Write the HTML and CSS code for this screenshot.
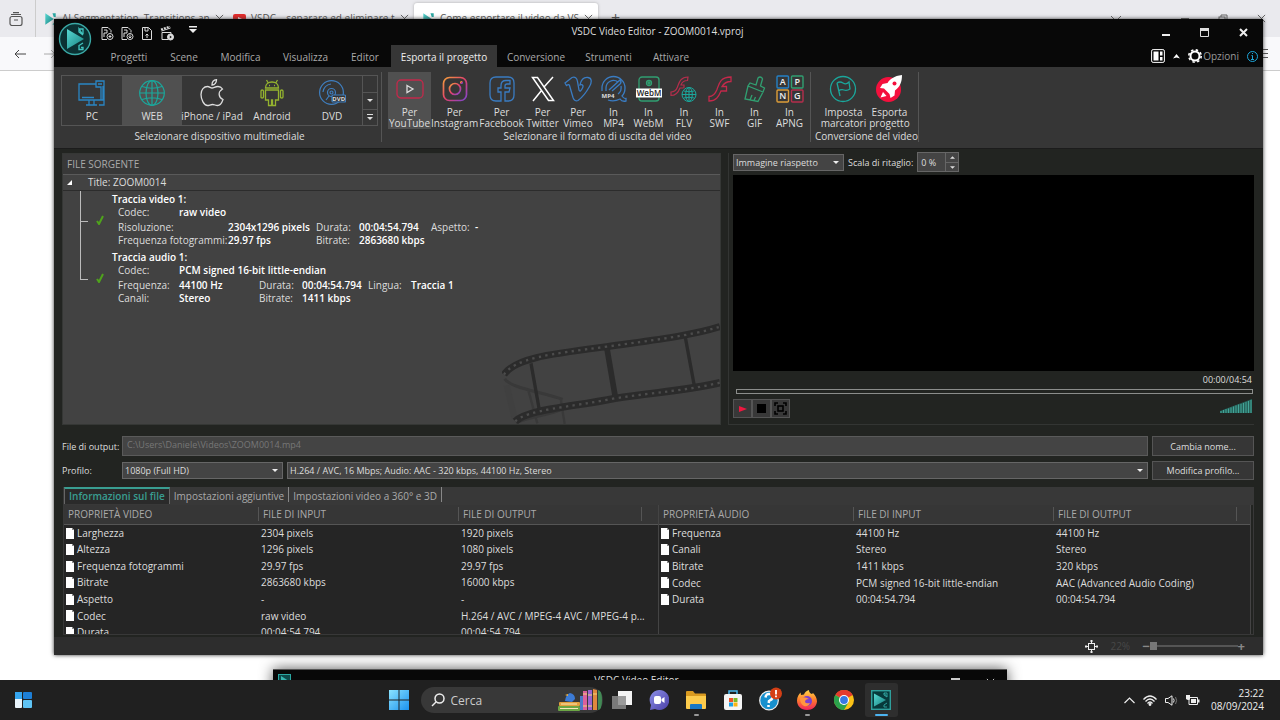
FILE: index.html
```html
<!DOCTYPE html>
<html lang="it">
<head>
    <meta charset="UTF-8">
    <meta name="viewport" content="width=device-width, initial-scale=1.0">
    <title>VSDC Video Editor - ZOOM0014.vproj</title>

    <link rel="stylesheet" href="styles.css">
</head>
<body>
    <!-- Shared icons -->
    <svg class="defs" width="0" height="0" aria-hidden="true">
        <linearGradient id="teal" x1="0" y1="0" x2="1" y2="1"><stop offset="0" stop-color="#58d8d2"/><stop offset="1" stop-color="#16807f"/></linearGradient>
        <linearGradient id="insta" x1="0" y1="0" x2="1" y2="1"><stop offset="0" stop-color="#f6a13b"/><stop offset=".5" stop-color="#e0406c"/><stop offset="1" stop-color="#7c46d0"/></linearGradient>
        <linearGradient id="win" x1="0" y1="0" x2="1" y2="1"><stop offset="0" stop-color="#8be3ff"/><stop offset="1" stop-color="#1a91ee"/></linearGradient>
        <linearGradient id="fire" x1="0" y1="0" x2="0" y2="1"><stop offset="0" stop-color="#ffd84a"/><stop offset=".5" stop-color="#ff7b2c"/><stop offset="1" stop-color="#f0245e"/></linearGradient>
        <linearGradient id="chat" x1="0" y1="0" x2="1" y2="1"><stop offset="0" stop-color="#8c8fe8"/><stop offset="1" stop-color="#4a3fa6"/></linearGradient>
        <symbol id="i-globe" viewBox="0 0 26 26"><g fill="none" stroke="currentColor" stroke-width="1.200"><circle cx="13" cy="13" r="12.3"/><ellipse cx="13" cy="13" rx="6" ry="12.3"/><path d="M13 .6v24.800M.6 13h24.800M3 6.500q10 3.500 20 0M3 19.500q10-3.500 20 0"/></g></symbol>
        <symbol id="i-vsdc" viewBox="0 0 20 20"><path d="M2 1l13 9-13 9z" fill="url(#teal)"/><path d="M13 1h5v6h-3zM18 12v7h-5z" fill="#2ba7a2"/></symbol>
        <symbol id="i-x" viewBox="0 0 10 10"><path d="M1 1l8 8M9 1L1 9" fill="none" stroke="currentColor"/></symbol>
        <symbol id="i-down" viewBox="0 0 8 4"><path d="M0 0h8L4 4z" fill="currentColor"/></symbol>
        <symbol id="i-file" viewBox="0 0 8 11"><path d="M0 0h6l2 2v9H0z" fill="#fff"/><path d="M6 0v2h2z" fill="#888"/></symbol>
        <symbol id="i-check" viewBox="0 0 8 10"><path d="M1 6l2 3L7 1" fill="none" stroke="#4fa31c" stroke-width="2"/></symbol>
    </svg>

    <div class="desktop">
        <!-- Browser behind the editor -->
        <div class="browser">
            <div class="browser-tabs">
                <span class="browser-lib"><svg width="14" height="14" viewBox="0 0 14 14" fill="none" stroke="#555" stroke-width="1.200"><rect x="1" y="4.500" width="12" height="9" rx="2"/><path d="M2 2.500h10M4 .6h6M5 8h4"/></svg></span>
                <div class="browser-tab"><svg width="13" height="14"><use href="#i-vsdc"/></svg><span>AI Segmentation, Transitions an</span><svg width="9" height="9"><use href="#i-x"/></svg></div>
                <div class="browser-tab"><svg width="13" height="10" viewBox="0 0 13 10"><rect width="13" height="10" rx="2" fill="#e22c2c"/><path d="M5 3l4 2-4 2z" fill="#fff"/></svg><span>VSDC – separare ed eliminare t</span><svg width="9" height="9"><use href="#i-x"/></svg></div>
                <div class="browser-tab current"><svg width="13" height="14"><use href="#i-vsdc"/></svg><span>Come esportare il video da VS</span><svg width="9" height="9"><use href="#i-x"/></svg></div>
                <span class="browser-plus">+</span>
                <div class="browser-window">
                    <svg width="12" height="8" viewBox="0 0 12 8" fill="none" stroke="#666"><path d="M1 1l5 5 5-5"/></svg>
                    <svg width="8" height="8" viewBox="0 0 8 8" stroke="#666"><path d="M0 3.500h8"/></svg>
                    <svg width="10" height="10" viewBox="0 0 10 10" fill="none" stroke="#666"><rect x="1" y="3" width="6" height="6"/><path d="M3 3V1h6v6H7"/></svg>
                    <svg width="9" height="9"><use href="#i-x"/></svg>
                </div>
            </div>
            <div class="browser-bar">
                <svg width="12" height="10" viewBox="0 0 12 10" fill="none" stroke="#444"><path d="M12 5H1M5 1L1 5l4 4"/></svg>
                <svg width="12" height="10" viewBox="0 0 12 10" fill="none" stroke="#aaa"><path d="M0 5h11M7 1l4 4-4 4"/></svg>
                <svg class="browser-menu" width="10" height="9" viewBox="0 0 10 9" stroke="#555"><path d="M0 .5h10M0 4.500h10M0 8.500h10"/></svg>
            </div>
        </div>

        <!-- Second editor window, mostly below the taskbar -->
        <div class="back-window">
            <svg width="13" height="13" viewBox="0 0 13 13"><rect x=".5" y=".5" width="12" height="12" fill="#0d4a4b" stroke="#2ba7a2"/><path d="M3 2l7 4.500L3 11z" fill="#38b6b0"/></svg>
            <span>VSDC Video Editor</span>
            <div><svg width="9" height="9" viewBox="0 0 9 9"><path d="M0 1h9" stroke="#ccc" stroke-width="2"/></svg><svg width="9" height="9"><use href="#i-x"/></svg></div>
        </div>

        <main class="editor">
            <header class="header">
                <svg class="logo" width="34" height="34" viewBox="0 0 34 34"><circle cx="17" cy="17" r="15.500" fill="#0b3133" stroke="#3aa9a6" stroke-width="1.400"/><path d="M9 7l17 10L9 27z" fill="url(#teal)"/><path d="M21 7h4v5M21 7v3l4 3zM25 21l-4 2.500v4h4v-2h-2" fill="none" stroke="#42c4bf" stroke-width="1.300"/></svg>
                <div class="header-rows">
                    <div class="titlebar">
                        <div class="quick">
                            <button type="button" aria-label="Nuovo progetto"><svg width="13" height="15" viewBox="0 0 13 15" fill="none" stroke="#ddd"><path d="M6 13.500H1v-12h6l3 3v2M3 4h3v3H3v4"/><circle cx="9" cy="10.500" r="3"/><path d="M9 9v3M7.500 10.500h3"/></svg></button>
                            <button type="button" aria-label="Apri progetto"><svg width="13" height="15" viewBox="0 0 13 15" fill="none" stroke="#ddd"><path d="M6 13.500H1v-12h6l3 3v2M3 4h3v3H3v4"/><circle cx="9" cy="10.500" r="3"/><path d="M9 8.500v3M7.500 10.500L9 12l1.500-1.500"/></svg></button>
                            <button type="button" aria-label="Salva progetto"><svg width="12" height="15" viewBox="0 0 12 15" fill="none" stroke="#ddd"><path d="M1.500 1.500h6l3 3v9h-9zM4 2v3h3V2"/><path d="M6 8v4M4.500 9.500L6 8l1.500 1.500"/></svg></button>
                            <button type="button" aria-label="Esporta video"><svg width="14" height="15" viewBox="0 0 14 15" fill="none" stroke="#ddd"><path d="M2 6.500h9v3M2 6.500v7h6M1.500 5l9-3"/><path d="M1 3.500l9-3" stroke-width="2" stroke-dasharray="2 1"/><circle cx="10.500" cy="11" r="3" fill="#ddd"/><path d="M9.800 9.500l2 1.500-2 1.500z" fill="#111" stroke="none"/></svg></button>
                            <button type="button" aria-label="Personalizza"><svg width="8" height="7" viewBox="0 0 8 7" fill="#eee"><path d="M0 0h8v1.500H0zM0 3h8L4 7z"/></svg></button>
                        </div>
                        <h1>VSDC Video Editor - ZOOM0014.vproj</h1>
                        <div class="window-buttons">
                            <button type="button" aria-label="Riduci"><svg width="8" height="10" viewBox="0 0 8 10"><path d="M0 8h8" stroke="#eee" stroke-width="2"/></svg></button>
                            <button type="button" aria-label="Ingrandisci"><svg width="9" height="9" viewBox="0 0 9 9"><path d="M.5.5h8v8h-8z" fill="none" stroke="#ddd"/><path d="M0 1.500h9" stroke="#ddd" stroke-width="3"/></svg></button>
                            <button type="button" aria-label="Chiudi"><svg width="9" height="9" viewBox="0 0 9 9"><path d="M1 1l7 7M8 1L1 8" stroke="#eee" stroke-width="2"/></svg></button>
                        </div>
                    </div>
                    <div class="menubar">
                        <nav class="menu">
                            <a href="#">Progetti</a>
                            <a href="#">Scene</a>
                            <a href="#">Modifica</a>
                            <a href="#">Visualizza</a>
                            <a href="#">Editor</a>
                            <a href="#" class="active">Esporta il progetto</a>
                            <a href="#">Conversione</a>
                            <a href="#">Strumenti</a>
                            <a href="#">Attivare</a>
                        </nav>
                        <div class="options">
                            <button type="button" aria-label="Disposizione"><svg width="14" height="14" viewBox="0 0 14 14"><rect x=".6" y=".6" width="12.800" height="12.800" rx="1.500" fill="none" stroke="#fff"/><path d="M2.500 2.500h5v9h-5zM9 2.500h2.500v4H9zM9 8h2.500v3.500H9z" fill="#fff"/></svg></button>
                            <button type="button" aria-label="Comprimi"><svg width="7" height="5" viewBox="0 0 7 5"><path d="M0 4.500L3.500 0 7 4.500l-3.500-1z" fill="#fff"/></svg></button>
                            <button type="button" class="opzioni"><svg width="14" height="14" viewBox="0 0 14 14" fill="none" stroke="#fff"><circle cx="7" cy="7" r="4.500" stroke-width="2"/><circle cx="7" cy="7" r="6.200" stroke-width="1.600" stroke-dasharray="2.440 2.430"/></svg>Opzioni</button>
                            <button type="button" aria-label="Informazioni"><svg width="11" height="11" viewBox="0 0 11 11" fill="none" stroke="#1ea5d8"><circle cx="5.500" cy="5.500" r="5"/><path d="M4.500 4.500h1v4M4 8.500h3M5 2.500h1"/></svg></button>
                        </div>
                    </div>
                </div>
            </header>

            <section class="ribbon">
                <div class="group">
                    <div class="gallery">
                        <button type="button" class="device"><svg width="28" height="26" viewBox="0 0 28 26" fill="none" stroke="#2a86c4" stroke-width="1.300"><path d="M18 4H1v16h24V6M18 6V1h8v24h-5M18 4v3h5v13M8 25h11M11 20v5M16 20v5M4 17.500h12M20 4h4"/></svg>PC</button>
                        <button type="button" class="device selected"><svg class="cyan" width="26" height="26"><use href="#i-globe"/></svg>WEB</button>
                        <button type="button" class="device"><svg width="24" height="28" viewBox="0 0 24 28" fill="none" stroke="#ddd" stroke-width="1.300"><path d="M12 9c2 0 3-1.500 6-1.500 2 0 3.500 1 4.500 2.500-5 3-4 8.500.5 10.500-1 3-3 6-5.500 6-2 0-3-1-5-1s-3.200 1-5 1C4 26.500 1 20.500 1 15.500s3-8 6.500-8c2 0 3 1.500 4.500 1.500zM12 6c0-3 2-5 4.500-5.300C16.500 3.500 15 6 12 6z"/></svg>iPhone / iPad</button>
                        <button type="button" class="device"><svg width="24" height="28" viewBox="0 0 24 28" fill="none" stroke="#94b32f" stroke-width="1.300"><path d="M5.500 9c0-4 3-6 6.500-6s6.500 2 6.500 6zM8 3.500L6.500 1M16 3.500L17.500 1M5.500 11h13v10h-3v5.500h-3V21h-1v5.500h-3V21h-3zM1 12q0-1 1.200-1T3.500 12v6q0 1-1.300 1T1 18zM20.500 12q0-1 1.200-1T23 12v6q0 1-1.300 1t-1.200-1z"/><path d="M9 6.500h1M14 6.500h1"/></svg>Android</button>
                        <button type="button" class="device"><svg width="27" height="26" viewBox="0 0 27 26" fill="none" stroke="#3f7fc0" stroke-width="1.200"><circle cx="12.500" cy="12.500" r="11.900"/><circle cx="12.500" cy="12.500" r="4"/><circle cx="12.500" cy="12.500" r="1.500"/><path d="M4 12q1-7 8-8M7 20l3-4"/><rect x="13" y="15" width="13.500" height="7" rx="1" fill="#333"/><text x="19.700" y="21" font-size="6" font-weight="700" text-anchor="middle" fill="#ddd" stroke="none">DVD</text></svg>DVD</button>
                        <div class="scroller">
                            <button type="button" aria-label="Su" disabled></button>
                            <button type="button" aria-label="Giù"><svg width="6" height="3"><use href="#i-down"/></svg></button>
                            <button type="button" aria-label="Altro"><svg width="6" height="7" viewBox="0 0 6 7" fill="#ddd"><path d="M0 0h6v1H0zM0 3h6L3 6z"/></svg></button>
                        </div>
                    </div>
                    <h2>Selezionare dispositivo multimediale</h2>
                </div>

                <div class="group">
                    <div class="formats">
                        <button type="button" class="tool selected"><svg width="28" height="26" viewBox="0 0 28 26" fill="none" stroke-width="1.300"><rect x="1" y="4" width="26" height="18" rx="4" stroke="#c4294b"/><path d="M11 9.500l6 3.500-6 3.500z" stroke="#ddd"/></svg>Per<br>YouTube</button>
                        <button type="button" class="tool"><svg width="26" height="26" viewBox="0 0 26 26" fill="none" stroke="url(#insta)" stroke-width="1.700"><rect x="1.500" y="1.500" width="23" height="23" rx="6"/><circle cx="13" cy="13" r="5.500"/><circle cx="19.500" cy="6.500" r=".7"/></svg>Per<br>Instagram</button>
                        <button type="button" class="tool"><svg width="26" height="26" viewBox="0 0 26 26" fill="none" stroke="#3a7cc2" stroke-width="1.300"><path d="M12 25H7q-6 0-6-6V7q0-6 6-6h12q6 0 6 6v12q0 6-6 6h-3V16h4l1-4h-5v-2q0-2 2-2h3V4.500h-4q-5 0-5 5V12H9v4h3z"/></svg>Per<br>Facebook</button>
                        <button type="button" class="tool"><svg width="24" height="26" viewBox="0 0 24 26" fill="none" stroke="#fff" stroke-width="1.500"><path d="M1.500 1.500h5l16 23h-5zM22 1l-9 10M10.500 14.500L2 25"/></svg>Per<br>Twitter</button>
                        <button type="button" class="tool"><svg width="28" height="26" viewBox="0 0 28 26" fill="none" stroke="#3a7cc2" stroke-width="1.300"><path d="M1 7l7-5.500c3-1 5 .5 5.500 4L15 14c1 2 2 1 3.500-2 1-2 .5-4-2.500-3 1-5 4-8 8-7.500s4 4.500 1.500 9-8 11.500-11.500 14c-2 1-4 0-5-3L5.500 9.500C5 8 4 8.500 2.500 9.500z"/></svg>Per<br>Vimeo</button>
                        <button type="button" class="tool"><svg width="28" height="26" viewBox="0 0 28 26" fill="none" stroke="#3a7cc2" stroke-width="1.300"><path d="M2 15V12A11.500 11.500 0 0 1 25 12q0 5-3 8 2 3 4 2.500v2.500q-4 1-6-2-6 3-12 1M6 15v-3a7.500 7.500 0 0 1 12-6M21 10q1 5-3 8M9 14L20 4q2 2 0 4l-8 7"/><text x="8" y="22" font-size="6" font-weight="700" text-anchor="middle" fill="#ddd" stroke="none">MP4</text></svg>In<br>MP4</button>
                        <button type="button" class="tool"><svg width="26" height="26" viewBox="0 0 26 26" fill="none" stroke="#319f71" stroke-width="1.300"><rect x="3" y="1" width="20" height="24" rx="3"/><circle cx="13" cy="7" r="2.500"/><circle cx="13" cy="7" r="1"/><path d="M0 12.500h26v9H0z" fill="#fff" stroke="none"/><text x="13" y="19.500" font-size="8" font-weight="600" text-anchor="middle" fill="#222" stroke="none">WebM</text></svg>In<br>WebM</button>
                        <button type="button" class="tool"><svg width="28" height="26" viewBox="0 0 28 26"><path d="M18 1C10 1 9 7 7.500 11 6 15 4 16 1 16v3.500c5.500 0 7.500-3.500 9-7.500h4V9h-3c1-3 3-4.500 6.500-4.500z" fill="none" stroke="#b52e4c" stroke-width="1.200"/><circle cx="19" cy="18.500" r="8" fill="#363636"/><g class="globe"><circle cx="19" cy="18.500" r="7"/><ellipse cx="19" cy="18.500" rx="3.300" ry="7"/><path d="M19 11.500v14M12 18.500h14M13.500 15q5.500 1.500 11 0M13.500 22q5.500-1.500 11 0"/></g></svg>In<br>FLV</button>
                        <button type="button" class="tool"><svg width="24" height="26" viewBox="0 0 24 26" fill="none" stroke="#c4294b" stroke-width="1.300"><path d="M23 1C12 1 11 8 9 13.500 7 18.500 5 20.500 1 20.500V25c7 0 9.500-4 12-10h5.500v-4.500H14c2-3.500 4-5 9-5z"/></svg>In<br>SWF</button>
                        <button type="button" class="tool"><svg width="22" height="26" viewBox="0 0 22 26" fill="none" stroke="#319f71" stroke-width="1.300"><path d="M12 9l2-7q2-2 4 0l.5 1-2 7 4 2-1.500 4L4 10l2-3zM4 10L1 23l13 2.500L19 16M6 24l2-5M10 24.500l1.500-3.500"/></svg>In<br>GIF</button>
                        <button type="button" class="tool"><svg width="28" height="28" viewBox="0 0 28 28" fill="none" stroke-width="1.400"><rect x="1" y="1" width="11.500" height="12" rx="1" stroke="#2480c5"/><rect x="15.500" y="1" width="11.500" height="12" rx="1" stroke="#319f71"/><rect x="1" y="15" width="11.500" height="12" rx="1" stroke="#dd9d39"/><rect x="15.500" y="15" width="11.500" height="12" rx="1" stroke="#b52e4c"/><g class="bold" fill="#eee" font-size="9" text-anchor="middle"><text x="6.700" y="10">A</text><text x="21.300" y="10">P</text><text x="6.700" y="24">N</text><text x="21.300" y="24">G</text></g></svg>In<br>APNG</button>
                    </div>
                    <h2>Selezionare il formato di uscita del video</h2>
                </div>

                <div class="group">
                    <div class="convert">
                        <button type="button" class="tool"><svg width="28" height="28" viewBox="0 0 28 28" fill="none" stroke="#1ba79c" stroke-width="1.300"><circle cx="14" cy="14" r="12.500"/><path d="M8 8l3 13M8 8q3-2 6 0t6-1l1 7q-3 2-6 1t-5.500 1"/></svg>Imposta<br>marcatori</button>
                        <button type="button" class="tool"><svg width="28" height="28" viewBox="0 0 28 28"><circle cx="13.500" cy="14.500" r="12.500" fill="#f4103d"/><path d="M27 0c-8 1-12 4-14.500 8l-5 1-2.500 4 4 .5L14.500 19l1 4 4-2.500.5-5C25 12 27 7 27 0zM8 17l-2.500 5.500 6-1.500z" fill="#fff"/><circle cx="19.500" cy="8.500" r="2" fill="#f4103d"/></svg>Esporta<br>progetto</button>
                    </div>
                    <h2>Conversione del video</h2>
                </div>
            </section>

            <div class="workspace">
                <div class="top-panels">
                    <section class="source">
                        <h2>FILE SORGENTE</h2>
                        <h3>Title: ZOOM0014</h3>
                        <div class="tracks">
                            <article class="track">
                                <svg width="8" height="10"><use href="#i-check"/></svg>
                                <div>
                                    <h4>Traccia video 1:</h4>
                                    <dl class="codec"><dt>Codec:</dt><dd>raw video</dd></dl>
                                    <dl class="video-props">
                                        <dt>Risoluzione:</dt><dd>2304x1296 pixels</dd><dt>Durata:</dt><dd>00:04:54.794</dd><dt>Aspetto:</dt><dd>-</dd>
                                        <dt>Frequenza fotogrammi:</dt><dd>29.97 fps</dd><dt>Bitrate:</dt><dd>2863680 kbps</dd>
                                    </dl>
                                </div>
                            </article>
                            <article class="track">
                                <svg width="8" height="10"><use href="#i-check"/></svg>
                                <div>
                                    <h4>Traccia audio 1:</h4>
                                    <dl class="codec"><dt>Codec:</dt><dd>PCM signed 16-bit little-endian</dd></dl>
                                    <dl class="audio-props">
                                        <dt>Frequenza:</dt><dd>44100 Hz</dd><dt>Durata:</dt><dd>00:04:54.794</dd><dt>Lingua:</dt><dd>Traccia 1</dd>
                                        <dt>Canali:</dt><dd>Stereo</dd><dt>Bitrate:</dt><dd>1411 kbps</dd>
                                    </dl>
                                </div>
                            </article>
                        </div>
                        <svg class="film" width="218" height="102" viewBox="186 70 654 306" fill="none" aria-hidden="true">
                            <g stroke="#393939">
                                <path d="M194 240C210 268 300 278 368 302" stroke-width="9"/>
                                <path d="M266 278l26 96M362 300l12 76" stroke-width="7"/>
                                <path d="M200 260l24 100" stroke-width="18" stroke="#404040"/>
                                <path d="M228 372C280 350 330 350 370 330" stroke-width="9"/>
                            </g>
                            <g stroke="#2b2b2b">
                                <path d="M192 228C225 178 330 166 500 144 640 124 750 112 840 84" stroke-width="21"/>
                                <path d="M226 368C262 332 390 326 525 299 650 280 740 276 840 252" stroke-width="22"/>
                                <path d="M273 194l25 140M736 116l27 146" stroke-width="10"/>
                                <path d="M501 150l25 146" stroke-width="17"/>
                            </g>
                            <g stroke="#4c4c4c" stroke-width="7" stroke-dasharray="7 13">
                                <path d="M192 228C225 178 330 166 500 144 640 124 750 112 840 84"/>
                                <path d="M226 368C262 332 390 326 525 299 650 280 740 276 840 252"/>
                            </g>
                        </svg>
                    </section>

                    <section class="preview">
                        <div class="preview-bar">
                            <span class="select aspect"><select aria-label="Aspetto"><option>Immagine riaspetto</option></select></span>
                            <label for="crop">Scala di ritaglio:</label>
                            <div class="spin">
                                <input id="crop" type="text" value="0 %">
                                <button type="button" aria-label="Aumenta"><svg class="flip" width="5" height="3"><use href="#i-down"/></svg></button>
                                <button type="button" aria-label="Diminuisci"><svg width="5" height="3"><use href="#i-down"/></svg></button>
                            </div>
                        </div>
                        <div class="screen"></div>
                        <time>00:00/04:54</time>
                        <input class="seek" type="range" value="0" aria-label="Posizione">
                        <div class="playback">
                            <button type="button" aria-label="Riproduci"><svg width="8" height="6" viewBox="0 0 8 6"><path d="M0 0l8 3-8 3z" fill="#ef1740"/></svg></button>
                            <button type="button" aria-label="Ferma"><svg width="9" height="9"><rect width="9" height="9" fill="#000"/></svg></button>
                            <button type="button" aria-label="Schermo intero"><svg width="13" height="13" viewBox="0 0 13 13" fill="none" stroke="#000" stroke-width="1.600"><path d="M1 4V1h3M9 1h3v3M12 9v3H9M4 12H1V9"/><rect x="4" y="4" width="5" height="5"/></svg></button>
                            <svg class="volume" width="32" height="14" viewBox="0 0 32 14"><path d="M0 14v-2L32 0v14z" fill="#26635b"/><path d="M1 14v-2M3.500 14v-3M6 14v-4M8.500 14V9.500M11 14V8.500M13.500 14V7.500M16 14V6.500M18.500 14V5.500M21 14v-9M23.500 14V4M26 14V3M28.500 14V2M31 14V1" stroke="#43a598"/></svg>
                        </div>
                    </section>
                </div>

                <form class="output">
                    <label for="file">File di output:</label>
                    <input id="file" type="text" value="C:\Users\Daniele\Videos\ZOOM0014.mp4" disabled>
                    <button type="button">Cambia nome...</button>
                    <label for="profile">Profilo:</label>
                    <div class="profiles">
                        <span class="select"><select id="profile"><option>1080p (Full HD)</option></select></span>
                        <span class="select"><select aria-label="Formato"><option>H.264 / AVC, 16 Mbps; Audio: AAC - 320 kbps, 44100 Hz, Stereo</option></select></span>
                    </div>
                    <button type="button">Modifica profilo...</button>
                </form>

                <section class="info">
                    <nav class="info-tabs">
                        <a href="#" class="active">Informazioni sul file</a>
                        <a href="#">Impostazioni aggiuntive</a>
                        <a href="#">Impostazioni video a 360° e 3D</a>
                    </nav>
                    <div class="tables">
                        <div class="table-wrap">
                            <table class="video-table">
                                <thead><tr><th>PROPRIETÀ VIDEO</th><th>FILE DI INPUT</th><th>FILE DI OUTPUT</th><th class="rest"></th></tr></thead>
                                <tbody>
                                    <tr><td><svg width="8" height="11"><use href="#i-file"/></svg>Larghezza</td><td>2304 pixels</td><td>1920 pixels</td><td></td></tr>
                                    <tr><td><svg width="8" height="11"><use href="#i-file"/></svg>Altezza</td><td>1296 pixels</td><td>1080 pixels</td><td></td></tr>
                                    <tr><td><svg width="8" height="11"><use href="#i-file"/></svg>Frequenza fotogrammi</td><td>29.97 fps</td><td>29.97 fps</td><td></td></tr>
                                    <tr><td><svg width="8" height="11"><use href="#i-file"/></svg>Bitrate</td><td>2863680 kbps</td><td>16000 kbps</td><td></td></tr>
                                    <tr><td><svg width="8" height="11"><use href="#i-file"/></svg>Aspetto</td><td>-</td><td>-</td><td></td></tr>
                                    <tr><td><svg width="8" height="11"><use href="#i-file"/></svg>Codec</td><td>raw video</td><td>H.264 / AVC / MPEG-4 AVC / MPEG-4 p...</td><td></td></tr>
                                    <tr><td><svg width="8" height="11"><use href="#i-file"/></svg>Durata</td><td>00:04:54.794</td><td>00:04:54.794</td><td></td></tr>
                                </tbody>
                            </table>
                        </div>
                        <div class="table-wrap">
                            <table class="audio-table">
                                <thead><tr><th>PROPRIETÀ AUDIO</th><th>FILE DI INPUT</th><th>FILE DI OUTPUT</th><th class="rest"></th></tr></thead>
                                <tbody>
                                    <tr><td><svg width="8" height="11"><use href="#i-file"/></svg>Frequenza</td><td>44100 Hz</td><td>44100 Hz</td><td></td></tr>
                                    <tr><td><svg width="8" height="11"><use href="#i-file"/></svg>Canali</td><td>Stereo</td><td>Stereo</td><td></td></tr>
                                    <tr><td><svg width="8" height="11"><use href="#i-file"/></svg>Bitrate</td><td>1411 kbps</td><td>320 kbps</td><td></td></tr>
                                    <tr><td><svg width="8" height="11"><use href="#i-file"/></svg>Codec</td><td>PCM signed 16-bit little-endian</td><td>AAC (Advanced Audio Coding)</td><td></td></tr>
                                    <tr><td><svg width="8" height="11"><use href="#i-file"/></svg>Durata</td><td>00:04:54.794</td><td>00:04:54.794</td><td></td></tr>
                                </tbody>
                            </table>
                        </div>
                    </div>
                </section>
            </div>

            <footer class="status">
                <svg width="13" height="13" viewBox="0 0 13 13" fill="none" stroke="#eee"><rect x="3.500" y="3.500" width="6" height="6"/><path d="M6.500 0v3M6.500 10v3M0 6.500h3M10 6.500h3M5 1h3M5 12h3M1 5v3M12 5v3"/></svg>
                <output>22%</output>
                <div class="zoom">
                    <button type="button" aria-label="Riduci zoom">−</button>
                    <input type="range" value="0" aria-label="Zoom">
                    <button type="button" aria-label="Aumenta zoom">+</button>
                </div>
            </footer>
        </main>
    </div>

    <footer class="taskbar">
        <div class="widgets"><svg width="18" height="16" viewBox="0 0 18 16"><rect width="7" height="16" rx="1" fill="#e9f4fb"/><rect width="7" height="7" fill="#35a5ee"/><rect x="8" width="9" height="7" rx="1" fill="#1d7fd6"/><rect x="8" y="8" width="9" height="8" rx="1" fill="#5fc4f5"/></svg></div>
        <div class="apps">
            <button type="button" class="start" aria-label="Start"><svg width="20" height="20" viewBox="0 0 20 20" fill="url(#win)"><path d="M0 0h9.500v9.500H0zM10.500 0H20v9.500h-9.500zM0 10.500h9.500V20H0zM10.500 10.500H20V20h-9.500z"/></svg></button>
            <div class="search">
                <svg width="14" height="14" viewBox="0 0 14 14" fill="none" stroke="#eee" stroke-width="1.500"><circle cx="8.500" cy="5.500" r="4.500"/><path d="M5 9l-4 4"/></svg>
                <input type="search" placeholder="Cerca" aria-label="Cerca">
                <svg width="45" height="22" viewBox="0 0 45 22"><rect x="1" y="13" width="21" height="4" rx="1" fill="#e3a03c"/><rect x="0" y="17" width="22" height="5" rx="1" fill="#6ca645"/><path d="M2 19.500h18M3 15h16" stroke="#f7e9b8"/><path d="M7 12q1-7 5-8 5 1 5 6l-3 3z" fill="#3c7bd6"/><path d="M7 6l3-1v2z" fill="#f0b13c"/><rect x="22" y="7" width="3" height="14" fill="#4b79c9"/><rect x="25" y="2" width="4" height="19" fill="#d9609c"/><rect x="30" y="1" width="4" height="20" fill="#9a62cf"/><path d="M35 0l4 1v20h-4z" fill="#e0883f"/><path d="M40 1q4 0 4 10t-4 10z" fill="#428a55"/><path d="M25 5h4M30 6h4M35 5h4M25 17h4M30 17h4" stroke="#f2d779"/></svg>
            </div>
            <button type="button" class="app" aria-label="Visualizzazione attività"><svg width="20" height="18" viewBox="0 0 20 18"><rect x="6" y="0" width="14" height="14" fill="#f3f3f3"/><rect y="5" width="14" height="13" fill="#8b8b8b" opacity=".85"/></svg></button>
            <button type="button" class="app" aria-label="Chat"><svg width="20" height="20" viewBox="0 0 20 20"><path d="M10 0a10 10 0 1 1-4 19l-5 1 1-5A10 10 0 0 1 10 0z" fill="url(#chat)"/><rect x="5" y="6" width="7" height="8" rx="2" fill="#fff"/><path d="M12.500 9l3-2v6l-3-2z" fill="#fff"/></svg></button>
            <button type="button" class="app open" aria-label="Esplora file"><svg width="20" height="18" viewBox="0 0 20 18"><path d="M0 1q0-1 1-1h6l2 2.500h10q1 0 1 1V17H0z" fill="#d99a20"/><path d="M0 5h20v12q0 1-1 1H1q-1 0-1-1z" fill="#fccb4c"/><path d="M4 18v-4q0-1 1-1h10q1 0 1 1v4z" fill="#1878c5"/></svg></button>
            <button type="button" class="app" aria-label="Microsoft Store"><svg width="20" height="20" viewBox="0 0 20 20"><path d="M6 5V1h8v4" fill="none" stroke="#4bb6ec" stroke-width="1.500"/><rect x="1" y="4" width="18" height="16" rx="2" fill="#f5f5f5"/><path d="M6 8h4v4H6z" fill="#ef5128"/><path d="M10.500 8h4v4h-4z" fill="#7cb928"/><path d="M6 12.500h4v4H6z" fill="#1ba1e8"/><path d="M10.500 12.500h4v4h-4z" fill="#f8b514"/></svg></button>
            <button type="button" class="app" aria-label="Guida"><svg width="24" height="26" viewBox="0 0 24 26"><circle cx="11" cy="13.500" r="9.300" fill="#1790ce" stroke="#eee" stroke-width="1.200"/><path d="M7.500 10.500q.5-4 4-3.500 4 .5 3 4-.5 1.500-3.500 3l-.3 2M10.500 18v2" fill="none" stroke="#fff" stroke-width="2.500"/><circle cx="18" cy="6.500" r="6" fill="#d43f15"/><path d="M18 3v4.500M18 8.500v1.700" stroke="#fff" stroke-width="1.800"/></svg></button>
            <button type="button" class="app open" aria-label="Firefox"><svg width="20" height="20" viewBox="0 0 20 20"><path d="M10 20C4 20 0 16 0 10.500 0 7 2 4 3.500 2.500L4 5l3-.5Q8 1 12 0q0 3 3 4l1-1q4 4 4 8.500C19.500 16.500 15.500 20 10 20z" fill="url(#fire)"/><circle cx="10" cy="11" r="5" fill="#7b3fd0"/><path d="M3 8q5-2 9 1-4 0-4 3 1 2 5 1-2 4-6 3-4-2-4-8z" fill="#ff9640"/></svg></button>
            <button type="button" class="app" aria-label="Chrome"><svg width="20" height="20" viewBox="0 0 20 20"><circle cx="10" cy="10" r="10" fill="#fbc116"/><path d="M10 10L1.300 5A10 10 0 0 1 18.700 5z" fill="#e33b2e"/><path d="M1.300 5A10 10 0 0 0 10 20l4.500-7.500L10 10z" fill="#2ba24c"/><circle cx="10" cy="10" r="5" fill="#fff"/><circle cx="10" cy="10" r="3.900" fill="#3679e4"/></svg></button>
            <button type="button" class="app current" aria-label="VSDC Video Editor"><svg width="20" height="20" viewBox="0 0 20 20"><rect x=".7" y=".7" width="18.600" height="18.600" fill="#07393b" stroke="#2f9e9b" stroke-width="1.400"/><path d="M3 3.500l12 6.500-12 6.500z" fill="url(#teal)"/><path d="M13 3h3v4M13 3v2l3 2zM16 13l-3 2v2h3" fill="none" stroke="#2f9e9b"/></svg></button>
        </div>
        <div class="tray">
            <svg width="11" height="7" viewBox="0 0 11 7" fill="none" stroke="#eee" stroke-width="1.200"><path d="M.5 6l5-5 5 5"/></svg>
            <svg width="14" height="11" viewBox="0 0 14 11" fill="none" stroke="#eee" stroke-width="1.300"><path d="M.5 4.500q6.500-7 13 0M2.500 6.500q4.500-5 9 0M4.500 8.500q2.500-3 5 0"/><circle cx="7" cy="9.500" r=".8" fill="#eee"/></svg>
            <svg width="13" height="11" viewBox="0 0 13 11" fill="none" stroke="#eee"><path d="M.5 3.500H3L7 .8v9.400L3 7.500H.5zM8.500 3.500q1.200 2 0 4"/><path d="M10.500 2q2.200 3.500 0 7" stroke="#777"/></svg>
            <svg width="14" height="11" viewBox="0 0 14 11"><path d="M3 2.500h8.500v7H3z" fill="none" stroke="#eee"/><path d="M5 4h5v4H5zM12 4.500h1.500v3H12zM0 0h4v4q0 1-1.500 1T0 4z" fill="#eee"/></svg>
            <time>23:22<br>08/09/2024</time>
        </div>
    </footer>
</body>
</html>
```

FILE: styles.css
```css
* {
    box-sizing: border-box;
}

body {
    margin: 0;
    height: 100vh;
    display: flex;
    flex-direction: column;
    overflow: hidden;
    font-family: "Open Sans", "Noto Sans", sans-serif;
    font-size: 10px;
    line-height: 13px;
    color: #ddd;
}

h1, h2, h3, h4, dl, dd {
    margin: 0;
    font-size: inherit;
    font-weight: 400;
}

button, input, select {
    font: inherit;
    color: inherit;
    background: none;
    border: 0;
    margin: 0;
    padding: 0;
}

a {
    color: inherit;
    text-decoration: none;
}

svg {
    display: block;
    flex: none;
}

.defs {
    position: absolute;
}

.bold {
    font-weight: 600;
}

.cyan {
    color: #1ba79c;
}

.globe {
    fill: none;
    stroke: #1ba79c;
}

.desktop {
    flex: 1;
    position: relative;
    overflow: hidden;
    background: #fff;
}

/* Browser */
.browser-tabs {
    height: 37px;
    display: flex;
    align-items: center;
    background: #eaeaee;
    color: #555;
}

.browser-lib {
    width: 36px;
    height: 37px;
    padding: 12px 0 0 9px;
    border-right: 1px solid #ccc;
}

.browser-tab {
    width: 184px;
    height: 31px;
    margin-right: 5px;
    padding: 0 7px 0 8px;
    display: flex;
    align-items: center;
    gap: 5px;
    border-radius: 3px;
}

.browser-tab span {
    flex: 1;
    white-space: nowrap;
}

.browser-tab.current {
    background: #fff;
    box-shadow: 0 0 3px #aaa;
}

.browser-plus {
    padding-left: 8px;
    font-size: 16px;
}

.browser-window {
    margin-left: auto;
    padding-right: 14px;
    display: flex;
    align-items: center;
    gap: 29px;
}

.browser-window svg:first-child {
    margin-right: 30px;
}

.browser-bar {
    height: 34px;
    padding: 0 12px 0 14px;
    display: flex;
    align-items: center;
    gap: 18px;
    background: #f9f9fb;
    border-bottom: 1px solid #ccc;
}

.browser-menu {
    margin-left: auto;
}

/* Windows on the desktop */
.back-window {
    position: absolute;
    top: 669px;
    left: 273px;
    right: 273px;
    height: 40px;
    padding: 4px 12px 0 5px;
    display: grid;
    grid-template-columns: 1fr auto 1fr;
    border-top: 1px solid #555;
    background: #080808;
    box-shadow: 0 0 14px #555;
}

.back-window div {
    display: flex;
    justify-content: flex-end;
    gap: 26px;
    padding-top: 4px;
}

.editor {
    position: absolute;
    top: 19px;
    right: 17px;
    bottom: 25px;
    left: 54px;
    display: flex;
    flex-direction: column;
    background: #222421;
    box-shadow: 0 0 4px #333;
}

/* Header */
.header {
    display: flex;
    background: #080808;
}

.logo {
    margin: 3px 0 0 4px;
}

.header-rows {
    flex: 1;
}

.titlebar {
    height: 26px;
    display: grid;
    grid-template-columns: 1fr auto 1fr;
    align-items: center;
}

.titlebar h1 {
    margin-right: 40px;
    padding-bottom: 2px;
}

.quick {
    display: flex;
    align-items: center;
    gap: 7px;
    padding: 2px 0 0 9px;
}

.quick button:last-child {
    margin: -7px 0 0 8px;
}

.window-buttons {
    display: flex;
    justify-content: flex-end;
    gap: 30px;
    padding-right: 15px;
}

.menubar {
    height: 22px;
    display: flex;
    justify-content: space-between;
}

.menu {
    display: grid;
    grid-template-columns: 60px 50px 63px 67px 52px 106px 78px 67px 58px;
    padding-left: 7px;
    line-height: 25px;
    text-align: center;
    color: #aaa;
}

.menu .active {
    background: #363636;
    color: #eee;
}

.options {
    display: flex;
    align-items: center;
    gap: 8px;
    padding-right: 5px;
    color: #999;
}

.opzioni {
    display: flex;
    align-items: center;
    gap: 1px;
}

/* Ribbon */
.ribbon {
    height: 82px;
    padding: 5px 7px 0;
    display: flex;
    background: #363636;
    border-bottom: 1px solid #1c1c1c;
}

.group {
    height: 70px;
    padding-right: 3px;
    margin-right: 6px;
    border-right: 1px solid #555;
}

.group + .group {
    margin-right: 4px;
}

.group:last-child {
    padding-right: 0;
}

.group h2 {
    line-height: 14px;
    text-align: center;
}

.gallery {
    display: flex;
    height: 51px;
    margin: 3px 0;
    border: 1px solid #555;
}

.device {
    width: 60px;
    display: flex;
    flex-direction: column;
    align-items: center;
    justify-content: space-between;
    white-space: nowrap;
    padding: 3px 0 2px;
}

.device svg {
    height: 28px;
}

.selected {
    background: #505050;
}

.scroller {
    width: 15px;
    display: grid;
    grid-template-rows: repeat(3, 1fr);
}

.scroller button {
    display: grid;
    place-items: center;
    border-left: 1px solid #555;
}

.scroller button + button {
    border-top: 1px solid #555;
}

.formats, .convert {
    display: grid;
    height: 57px;
}

.formats {
    grid-template-columns: 43px 47px 47px 35px 36px 35px 35px 36px repeat(3, 35px);
}

.convert {
    grid-template-columns: 46px 46px;
    justify-content: center;
}

.tool {
    display: block;
    padding-top: 2px;
    line-height: 11px;
    text-align: center;
    white-space: nowrap;
}

.tool > svg {
    height: 28px;
    margin: 0 auto 4px;
}

/* Workspace */
.workspace {
    flex: 1;
    min-height: 0;
    display: flex;
    flex-direction: column;
    padding: 4px 9px 0 8px;
}

.top-panels {
    display: grid;
    grid-template-columns: minmax(0, 659fr) minmax(0, 526fr);
    gap: 7px;
}

.source {
    position: relative;
    height: 272px;
    border: 1px solid #353735;
    background: #424242;
}

.source h2 {
    height: 21px;
    padding-left: 4px;
    line-height: 20px;
    color: #aaa;
    background: #383838;
    border-bottom: 1px solid #5a5a5a;
}

.source h3 {
    height: 16px;
    padding-left: 4px;
    display: flex;
    align-items: center;
    gap: 16px;
    border-bottom: 1px solid #2c2c2c;
}

.source h3::before {
    content: '';
    border-left: 5px solid transparent;
    border-bottom: 5px solid #fff;
}

.tracks {
    margin-left: 17px;
    padding-top: 2px;
    display: grid;
    gap: 4px;
    white-space: nowrap;
}

.track {
    display: grid;
    grid-template-columns: 16px 16px 1fr;
    align-items: center;
}

/* branch of the tree, down to the middle of the track */
.track::before {
    content: '';
    align-self: start;
    width: 7px;
    height: 30px;
    margin-top: -2px;
    border: solid #bbb;
    border-width: 0 0 1px 1px;
}

.track + .track::before {
    height: 58px;
    margin-top: -30px;
}

.track h4, .track dd {
    font-weight: 600;
    color: #fff;
}

.track dl {
    display: grid;
    padding-left: 6px;
}

.track .codec {
    grid-template-columns: 61px auto;
    justify-content: start;
    padding-bottom: 2px;
}

.video-props {
    grid-template-columns: 110px 88px 43px 72px 44px auto;
}

.audio-props {
    grid-template-columns: 61px 80px 43px 66px 43px auto;
}

.film {
    position: absolute;
    right: 0;
    bottom: 0;
}

.preview {
    padding-left: 4px;
    border: solid #333533;
    border-width: 0 0 1px 1px;
    display: flex;
    flex-direction: column;
    font-size: 9px;
}

.preview-bar {
    display: flex;
    align-items: center;
    gap: 4px;
    height: 18px;
    margin-bottom: 4px;
}

.select {
    display: grid;
    align-items: center;
    position: relative;
    height: 17px;
    border: 1px solid #666;
    background: #444;
}

.select select {
    appearance: none;
    width: 100%;
    padding: 0 14px 0 2px;
    line-height: 15px;
}

.select::after {
    content: '';
    position: absolute;
    right: 4px;
    border: solid transparent;
    border-width: 3px 3px 0;
    border-top-color: #eee;
}

.aspect {
    width: 111px;
}

.spin {
    display: grid;
    grid-template-columns: 27px 13px;
    grid-template-rows: 9px 9px;
    border: 1px solid #666;
    background: #444;
}

.spin input {
    grid-row: span 2;
    width: 100%;
    padding-left: 3px;
}

.spin button {
    display: grid;
    place-items: center;
    border-left: 1px solid #666;
}

.spin button + button {
    border-top: 1px solid #666;
}

.flip {
    transform: rotate(180deg);
}

.screen {
    height: 196px;
    background: #000;
}

.preview time {
    padding: 2px 2px 0;
    text-align: right;
}

.seek {
    appearance: none;
    height: 5px;
    margin: 3px 1px 5px 3px;
    border: 1px solid #8b8d8b;
}

.seek::-webkit-slider-thumb {
    appearance: none;
    width: 1px;
    height: 5px;
}

.playback {
    display: flex;
}

.playback button {
    display: grid;
    place-items: center;
    width: 19px;
    height: 19px;
    border: 1px solid #555;
    background: #383838;
}

.volume {
    margin-left: auto;
    margin-right: 2px;
}

.output {
    display: grid;
    grid-template-columns: 60px minmax(0, 1fr) 102px;
    grid-template-rows: 20px 19px;
    align-items: center;
    row-gap: 5px;
    margin: 11px 0 7px;
    font-size: 9px;
}

.output > input, .profiles {
    margin-right: 4px;
}

.output > input {
    height: 20px;
    padding: 0 4px 3px;
    border: 1px solid #5a5a5a;
    background: #444;
    color: #777;
}

.output > button {
    height: 100%;
    border: 1px solid #555;
    background: #363636;
}

.profiles {
    display: grid;
    grid-template-columns: 161px minmax(0, 1fr);
    gap: 4px;
}

/* File properties */
.info {
    flex: 1;
    min-height: 0;
    display: flex;
    flex-direction: column;
    margin: 0 0 2px 1px;
    border: 1px solid #383838;
    border-top: 0;
}

.info-tabs {
    display: flex;
    height: 18px;
    background: #383838;
    line-height: 18px;
    color: #aaa;
}

.info-tabs a {
    padding: 0 4px;
    border-right: 1px solid #888;
    height: 15px;
}

.info-tabs .active {
    height: 17px;
    border: 1px solid #666;
    border-top: 2px solid #399e91;
    border-bottom: 0;
    background: #2a2a2a;
    color: #399e91;
    font-weight: 600;
    line-height: 15px;
}

.tables {
    flex: 1;
    min-height: 0;
    display: grid;
    grid-template-columns: 595fr 592fr;
    margin-right: 2px;
    background: #252525;
}

.table-wrap {
    overflow: hidden;
    border-right: 1px solid #444;
}

table {
    width: 100%;
    table-layout: fixed;
    border-collapse: separate;
    border-spacing: 0;
    white-space: nowrap;
}

.video-table {
    height: 136px;
}

.audio-table {
    height: 103px;
}

th {
    width: 200px;
    height: 20px;
    padding: 0 4px;
    text-align: left;
    font-weight: 400;
    color: #aaa;
    background: #363636 linear-gradient(#555, #555) right 2px / 1px 14px no-repeat;
    border-bottom: 1px solid #555;
}

th:first-child {
    width: 195px;
}

th:nth-child(3) {
    width: 183px;
}

th.rest {
    width: auto;
    background-image: none;
}

td {
    padding: 0 2px;
    line-height: 15px;
}

td svg {
    display: inline-block;
    vertical-align: middle;
    margin: -2px 3px 0 0;
}

/* Status bar */
.status {
    height: 18px;
    padding-right: 18px;
    display: flex;
    align-items: center;
    justify-content: flex-end;
    gap: 12px;
    background: #2d2d2d;
    color: #484848;
}

.zoom {
    display: flex;
    align-items: center;
    color: #888;
}

.zoom button {
    font-size: 13px;
    font-weight: 700;
}

.zoom input {
    appearance: none;
    width: 88px;
    height: 2px;
    background: #555;
}

.zoom input::-webkit-slider-thumb {
    appearance: none;
    width: 7px;
    height: 8px;
    background: #777;
}

/* Taskbar */
.taskbar {
    height: 40px;
    display: grid;
    grid-template-columns: 1fr auto 1fr;
    align-items: center;
    background: #202020;
    color: #eee;
}

.widgets {
    padding-left: 15px;
}

.apps {
    display: flex;
    align-items: center;
    padding-left: 8px;
}

.start {
    margin-right: 12px;
}

.search {
    width: 182px;
    height: 26px;
    margin-right: 1px;
    padding-left: 10px;
    display: flex;
    align-items: center;
    gap: 6px;
    border-radius: 13px;
    background: #383838;
}

.search input {
    flex: 1;
    min-width: 0;
    font-size: 12px;
}

.search input::placeholder {
    color: #ccc;
}

.app {
    position: relative;
    width: 33px;
    height: 34px;
    margin: 0 2px;
    display: grid;
    place-items: center;
    border-radius: 3px;
}

.app.open::after, .app.current::after {
    content: '';
    position: absolute;
    bottom: 1px;
    width: 5px;
    height: 2px;
    border-radius: 1px;
    background: #999;
}

.app.current {
    background: #2e2e2e;
}

.app.current::after {
    width: 13px;
    background: #4cb3f0;
}

.tray {
    display: flex;
    align-items: center;
    justify-content: flex-end;
    gap: 8px;
    padding-right: 16px;
}

.tray time {
    margin-left: 3px;
    text-align: right;
}
```
